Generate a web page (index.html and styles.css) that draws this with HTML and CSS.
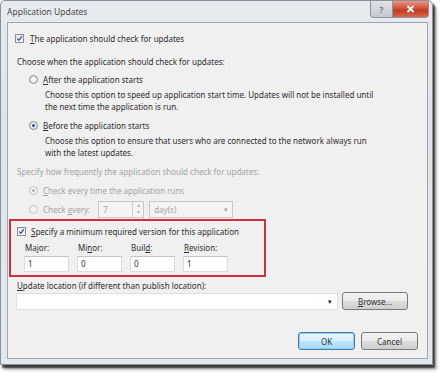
FILE: index.html
```html
<!DOCTYPE html>
<html>
<head>
<meta charset="utf-8">
<link rel="stylesheet" href="styles.css">
</head>
<body>
<div class="window">
  <div class="titlebar">
    <span class="title">Application Updates</span>
    <div class="caption-btns">
      <div class="cbtn help">?</div>
      <div class="cbtn close">
        <svg width="9" height="8" viewBox="0 0 9 8"><path d="M1.5 1 L7.5 7 M7.5 1 L1.5 7" stroke="#fff" stroke-width="1.8"/></svg>
      </div>
    </div>
  </div>
  <div class="client">
    <div class="row check-main">
      <span class="check"><svg width="7" height="7" viewBox="0 0 8 8"><path d="M1.5 4.2 L3.2 6 L6.6 1.6" stroke="#2b4f8c" stroke-width="1.4" fill="none"/></svg></span>
      <span class="lbl"><u>T</u>he application should check for updates</span>
    </div>
    <div class="row plain choose">Choose when the application should check for updates:</div>
    <div class="row radio-row r-after">
      <span class="radio"></span><span class="lbl"><u>A</u>fter the application starts</span>
    </div>
    <div class="desc">Choose this option to speed up application start time. Updates will not be installed until<br>the next time the application is run.</div>
    <div class="row radio-row r-before">
      <span class="radio on"></span><span class="lbl"><u>B</u>efore the application starts</span>
    </div>
    <div class="desc">Choose this option to ensure that users who are connected to the network always run<br>with the latest updates.</div>
    <div class="row plain disabled freq">Specify how frequently the application should check for updates:</div>
    <div class="row radio-row disabled r-every">
      <span class="radio on dis"></span><span class="lbl"><u>C</u>heck every time the application runs</span>
    </div>
    <div class="row radio-row disabled r-interval">
      <span class="radio dis"></span><span class="lbl">Check <u>e</u>very:</span>
      <span class="spin"><span class="spin-val">7</span><span class="spin-arrows"><span>&#9652;</span><span>&#9662;</span></span></span>
      <span class="combo-dis"><span>day(s)</span><span class="arr">&#9662;</span></span>
    </div>
    <div class="highlight">
      <div class="row min-check">
        <span class="check"><svg width="7" height="7" viewBox="0 0 8 8"><path d="M1.5 4.2 L3.2 6 L6.6 1.6" stroke="#2b4f8c" stroke-width="1.4" fill="none"/></svg></span>
        <span class="lbl"><u>S</u>pecify a minimum required version for this application</span>
      </div>
      <div class="ver-grid">
        <div class="ver"><span class="vlbl">Ma<u>j</u>or:</span><span class="vin">1</span></div>
        <div class="ver"><span class="vlbl">Mi<u>n</u>or:</span><span class="vin">0</span></div>
        <div class="ver"><span class="vlbl">Buil<u>d</u>:</span><span class="vin">0</span></div>
        <div class="ver"><span class="vlbl"><u>R</u>evision:</span><span class="vin">1</span></div>
      </div>
    </div>
    <div class="row plain update-lbl"><u>U</u>pdate location (if different than publish location):</div>
    <div class="loc-row">
      <span class="loc-combo"><span class="arr">&#9662;</span></span>
      <span class="btn browse"><u>B</u>rowse...</span>
    </div>
    <div class="btn-row">
      <span class="btn ok">OK</span>
      <span class="btn cancel">Cancel</span>
    </div>
  </div>
</div>
</body>
</html>
```
FILE: styles.css
```css
html, body {
  margin: 0;
  padding: 0;
  background: #ffffff;
}
body {
  width: 441px;
  height: 373px;
  overflow: hidden;
  font-family: "Noto Sans", "Open Sans", sans-serif;
  font-size: 8px;
  color: #2e2e2e;
}
u { text-decoration: underline; text-underline-offset: 1px; }

.window {
  box-sizing: border-box;
  width: 433px;
  height: 365px;
  border: 1px solid #8c9198;
  border-radius: 5px 5px 0 0;
  background: linear-gradient(#e7ebef, #dfe4ea 30%, #e4e8ec);
  box-shadow: 2px 3px 2px rgba(0,0,0,0.7), 4px 5px 3px rgba(0,0,0,0.25);
  padding: 0 4px 5px 6px;
  display: flex;
  flex-direction: column;
}
.titlebar {
  height: 21px;
  display: flex;
  justify-content: space-between;
  align-items: flex-start;
}
.title {
  margin-top: 5px;
  font-size: 8.5px;
  color: #4a4a4a;
}
.caption-btns {
  display: flex;
  margin-right: -1px;
}
.cbtn {
  height: 17px;
  box-sizing: border-box;
  display: flex;
  align-items: center;
  justify-content: center;
  border: 1px solid #8d949c;
  border-top: none;
}
.help {
  width: 23px;
  border-radius: 0 0 0 4px;
  background: linear-gradient(#dfe3e8, #c4cad1);
  color: #6a7078;
  font-size: 8px;
  font-weight: bold;
}
.close {
  width: 36px;
  border-left: none;
  border-radius: 0 0 4px 0;
  background: linear-gradient(#e89a85, #d4513a 45%, #c23a22 60%, #d7694f);
}
.client {
  flex: 1;
  border: 1px solid #9ea6b0;
  background: #f0f0f0;
  display: flex;
  flex-direction: column;
}
.row {
  display: flex;
  align-items: center;
  height: 12px;
  white-space: nowrap;
}
.check {
  box-sizing: border-box;
  width: 9px;
  height: 9px;
  border: 1px solid #8f8f8f;
  background: linear-gradient(#dfe6f0, #f6f8fb);
  display: flex;
  align-items: center;
  justify-content: center;
  margin-right: 6px;
}
.check-main { margin-top: 9px; padding-left: 7px; }
.plain { padding-left: 9px; }
.choose { margin-top: 11px; }
.radio {
  box-sizing: border-box;
  width: 9px;
  height: 9px;
  border-radius: 50%;
  border: 1px solid #8a8a8a;
  background: radial-gradient(circle, #ffffff, #dcdcdc);
  margin-right: 5px;
  position: relative;
}
.radio.on::after {
  content: "";
  position: absolute;
  left: 2px; top: 2px;
  width: 3px; height: 3px;
  border-radius: 50%;
  background: #1f4f8f;
}
.radio.dis { border-color: #c2c2c2; background: #f4f4f4; }
.radio.on.dis::after { background: #b0b0b0; }
.radio-row { padding-left: 21px; }
.r-after { margin-top: 6px; }
.r-before { margin-top: 6px; }
.desc {
  margin-top: 4px;
  padding-left: 37px;
  line-height: 12px;
  white-space: nowrap;
}
.disabled { color: #a3a3a3; }
.freq { margin-top: 6px; }
.r-every { margin-top: 7px; }
.r-interval { margin-top: 5px; height: 17px; }
.spin {
  box-sizing: border-box;
  margin-left: 8px;
  width: 46px;
  height: 17px;
  border: 1px solid #c8c8c8;
  background: #f4f4f4;
  display: flex;
  justify-content: space-between;
  align-items: center;
  padding-left: 4px;
}
.spin-arrows {
  display: flex;
  flex-direction: column;
  width: 10px;
  height: 15px;
  border-left: 1px solid #d0d0d0;
  font-size: 6px;
  line-height: 7px;
  text-align: center;
  color: #b5b5b5;
}
.combo-dis {
  box-sizing: border-box;
  margin-left: 5px;
  width: 84px;
  height: 17px;
  border: 1px solid #c8c8c8;
  background: #f4f4f4;
  display: flex;
  justify-content: space-between;
  align-items: center;
  padding: 0 4px;
}
.arr { font-size: 7px; color: #555; }
.combo-dis .arr { color: #a0a0a0; }
.highlight {
  box-sizing: border-box;
  margin-top: 1px;
  margin-left: 1px;
  width: 257px;
  height: 58px;
  border: 2px solid #d0313b;
  padding: 4px 0 3px 4px;
}
.min-check { padding-left: 2px; }
.min-check .check { margin-right: 5px; }
.ver-grid {
  display: flex;
  gap: 8px;
  margin-top: 5px;
  padding-left: 9px;
}
.ver {
  display: flex;
  flex-direction: column;
  width: 45px;
}
.vlbl {
  height: 12px;
  line-height: 12px;
  padding-left: 1px;
}
.vin {
  margin-top: 2px;
  box-sizing: border-box;
  height: 16px;
  border: 1px solid #dcdcdc;
  border-top-color: #c4c4c4;
  background: #fff;
  padding-left: 3px;
  line-height: 14px;
}
.update-lbl { margin-top: 2px; }
.loc-row {
  margin-top: 1px;
  display: flex;
  align-items: center;
  padding-left: 8px;
  height: 18px;
}
.loc-combo {
  box-sizing: border-box;
  width: 322px;
  height: 17px;
  border: 1px solid #e0e0e0;
  background: #fff;
  display: flex;
  justify-content: flex-end;
  align-items: center;
  padding-right: 5px;
}
.loc-combo .arr { color: #222; }
.btn {
  box-sizing: border-box;
  display: flex;
  align-items: center;
  justify-content: center;
  height: 18px;
  border: 1px solid #7a7a7a;
  border-radius: 3px;
  background: linear-gradient(#f3f3f3, #ebebeb 50%, #dddddd 51%, #cfcfcf);
}
.browse {
  margin-left: 4px;
  width: 66px;
}
.btn-row {
  margin-top: 22px;
  display: flex;
  justify-content: flex-end;
  gap: 6px;
  padding-right: 9px;
}
.ok {
  width: 57px;
  border-color: #3d7cb0;
  box-shadow: inset 0 0 0 1px #8fd0f0;
  background: linear-gradient(#eaf6fd, #d9f0fc 50%, #bee6fd 51%, #a7d9f5);
}
.cancel { width: 57px; }
```
